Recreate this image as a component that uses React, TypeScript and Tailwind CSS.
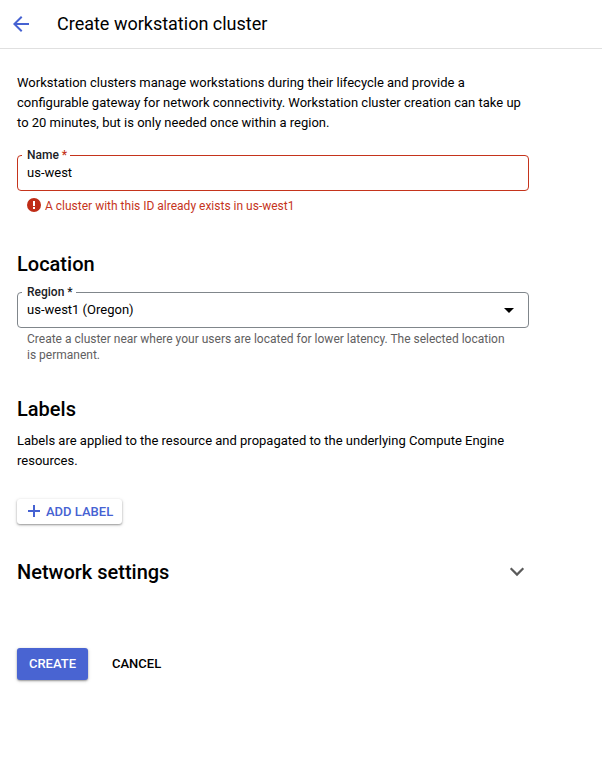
import React from "react";

const FieldLabel = ({ children }: { children: React.ReactNode }) => (
  <legend className="ml-1 h-0 pl-[5px] pr-[3px] text-xs font-medium leading-3 text-[#202124]">
    <span className="relative -top-[7px] block">{children}</span>
  </legend>
);

export default function App() {
  return (
    <div className="min-h-[771px] w-full bg-white font-['Roboto',sans-serif] text-[13px] leading-5 text-black">
      <header className="flex h-[49px] items-center border-b border-[#e0e0e0] pl-[9px]">
        <svg width="24" height="24" viewBox="0 0 24 24" fill="#4662d2">
          <path d="M20 11H7.83l5.59-5.59L12 4l-8 8 8 8 1.41-1.41L7.83 13H20v-2z" />
        </svg>
        <h1 className="ml-6 text-lg leading-6">Create workstation cluster</h1>
      </header>
      <main className="ml-[17px] w-[512px] pt-6">
        <p className="whitespace-nowrap">
          Workstation clusters manage workstations during their lifecycle and provide a<br />
          configurable gateway for network connectivity. Workstation cluster creation can take up<br />
          to 20 minutes, but is only needed once within a region.
        </p>
        <fieldset className="mt-[22px] h-9 rounded border border-[#c5341c]">
          <FieldLabel>Name <span className="text-[#c5341c]">*</span></FieldLabel>
          <div className="px-[9px] pt-[7px]">us-west</div>
        </fieldset>
        <div className="mt-[7px] flex h-4 items-center pl-[9px] text-xs text-[#c5341c]">
          <svg className="-mt-0.5" width="16" height="16" viewBox="0 0 16 16">
            <circle cx="8" cy="8" r="7" fill="#bf2c16" />
            <path d="M7 4h2v5H7zM7 10h2v2H7z" fill="#fff" />
          </svg>
          <span className="ml-[3px]">A cluster with this ID already exists in us-west1</span>
        </div>
        <h2 className="mt-[38px] text-xl font-medium leading-6">Location</h2>
        <fieldset className="mt-4 h-9 rounded border border-[#80868b]">
          <FieldLabel>Region *</FieldLabel>
          <div className="flex items-center justify-between pl-[9px] pr-[14px] pt-[7px]">
            us-west1 (Oregon)
            <svg width="10" height="5" viewBox="0 0 10 5"><path d="M0 0h10L5 5z" /></svg>
          </div>
        </fieldset>
        <p className="mt-[3px] whitespace-nowrap pl-[10px] text-xs leading-4 text-[#5f6061]">
          Create a cluster near where your users are located for lower latency. The selected location<br />is permanent.
        </p>
        <h2 className="mt-[34px] text-xl font-medium leading-6">Labels</h2>
        <p className="mt-[10px]">Labels are applied to the resource and propagated to the underlying Compute Engine<br />resources.</p>
        <button className="mt-7 flex h-[25px] w-[105px] items-center rounded-[3px] pl-2 font-medium text-[#4662d2] shadow-[0_1px_2px_rgba(0,0,0,0.35),0_1px_4px_rgba(0,0,0,0.12)]">
          <svg className="-mt-px" width="18" height="18" viewBox="0 0 18 18" fill="currentColor"><path d="M8 3h2v5h5v2h-5v5H8v-5H3V8h5z" /></svg>
          <span className="ml-[3px] whitespace-nowrap">ADD LABEL</span>
        </button>
        <div className="mt-9 flex h-6 items-center justify-between">
          <h2 className="text-xl font-medium leading-6">Network settings</h2>
          <svg width="24" height="24" viewBox="0 0 24 24" fill="none" stroke="#5a5a5a" strokeWidth="2.2"><path d="m5.7 8.3 6.3 6.3 6.3-6.3" /></svg>
        </div>
        <div className="mt-16 flex gap-6 font-medium">
          <button className="h-8 w-[71px] rounded-[3px] bg-[#4964d2] text-white shadow-[0_1px_2px_rgba(0,0,0,0.35),0_1px_4px_rgba(0,0,0,0.12)]">CREATE</button>
          <button>CANCEL</button>
        </div>
      </main>
    </div>
  );
}
